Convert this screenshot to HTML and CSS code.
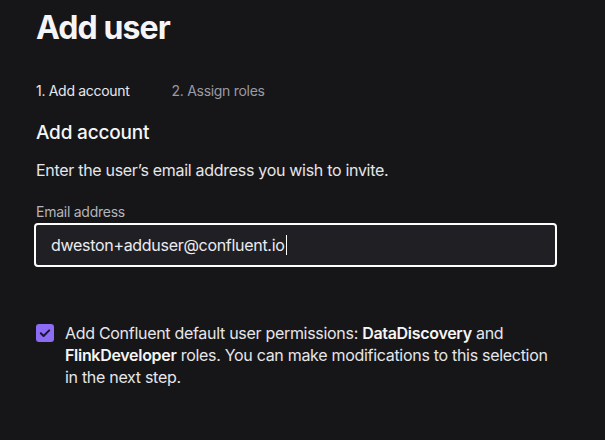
FILE: index.html
```html
<!DOCTYPE html>
<html>
<head>
<meta charset="utf-8">
<link rel="stylesheet" href="styles.css">
</head>
<body>
<main class="page">
  <h1 class="title">Add user</h1>
  <nav class="steps">
    <span class="step step-active">1. Add account</span>
    <span class="step">2. Assign roles</span>
  </nav>
  <h2 class="section-title">Add account</h2>
  <p class="desc">Enter the user’s email address you wish to invite.</p>
  <label class="label">Email address</label>
  <div class="input"><span class="input-text">dweston+adduser@confluent.io</span><span class="caret"></span></div>
  <div class="check-row">
    <span class="checkbox">
      <svg width="18" height="18" viewBox="0 0 18 18"><path d="M4.8 9.2 L7.6 12 L13.2 6.4" fill="none" stroke="#1b1530" stroke-width="2" stroke-linecap="round" stroke-linejoin="round"/></svg>
    </span>
    <p class="check-text">Add Confluent default user permissions: <b>DataDiscovery</b> and <b>FlinkDeveloper</b> roles. You can make modifications to this selection in the next step.</p>
  </div>
</main>
</body>
</html>
```
FILE: styles.css
```css
html, body {
  margin: 0;
  padding: 0;
  background: #161618;
  color: #f1f1f3;
  font-family: Inter, "Noto Sans", sans-serif;
  width: 605px;
  height: 440px;
  overflow: hidden;
}
.page {
  padding: 8px 0 0 36px;
  display: flex;
  flex-direction: column;
  align-items: flex-start;
}
.title {
  margin: 0;
  font-size: 32px;
  line-height: 40px;
  font-weight: 700;
  letter-spacing: -0.9px;
  color: #f5f5f7;
}
.steps {
  margin-top: 33px;
  display: flex;
  gap: 42px;
  font-size: 14px;
  line-height: 20px;
  letter-spacing: -0.3px;
  color: #9b9ba3;
}
.step-active {
  color: #e8e8ec;
}
.section-title {
  margin: 19px 0 0;
  font-size: 19px;
  line-height: 26px;
  font-weight: 500;
  letter-spacing: -0.2px;
  color: #f5f5f7;
}
.desc {
  margin: 12px 0 0;
  font-size: 16px;
  line-height: 24px;
  letter-spacing: -0.3px;
  color: #e6e6ea;
}
.label {
  margin-top: 20px;
  font-size: 14px;
  line-height: 20px;
  letter-spacing: -0.25px;
  color: #b4b4bb;
}
.input {
  margin: 1px 0 0 -2px;
  box-sizing: border-box;
  width: 523px;
  height: 44px;
  border: 2px solid #ffffff;
  border-radius: 4px;
  background: #202024;
  display: flex;
  align-items: center;
  padding-left: 15px;
  font-size: 16px;
  letter-spacing: -0.3px;
  color: #ececf0;
}
.caret {
  width: 1px;
  height: 20px;
  background: #ffffff;
  margin-left: 1px;
}
.check-row {
  margin-top: 55px;
  display: flex;
  gap: 11px;
  align-items: flex-start;
}
.checkbox {
  width: 18px;
  height: 18px;
  border-radius: 3px;
  background: #8c6cf5;
  margin-top: 2px;
  flex: none;
  display: block;
}
.checkbox svg {
  display: block;
}
.check-text {
  margin: 0;
  width: 490px;
  font-size: 16px;
  line-height: 22px;
  letter-spacing: -0.3px;
  color: #e6e6ea;
}
.check-text b {
  font-weight: 600;
  color: #f5f5f7;
}
```
